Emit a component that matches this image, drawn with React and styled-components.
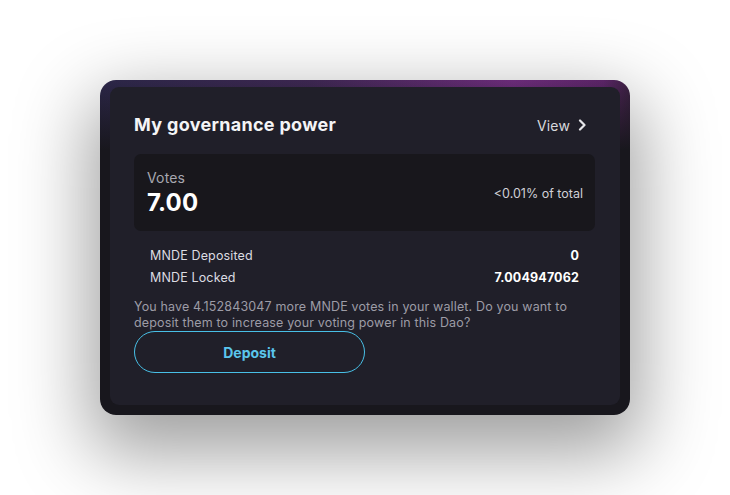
import React from 'react'
import styled, { createGlobalStyle } from 'styled-components'

const Global = createGlobalStyle`
    html, body {
        margin: 0;
        padding: 0;
        background: #ffffff;
    }
    body {
        font-family: Inter, "Noto Sans", sans-serif;
    }
`

const ChevronRight = () => (
    <svg width="10" height="12" viewBox="0 0 10 12" fill="none">
        <path d="M3 1.5 L7.5 6 L3 10.5" stroke="#e6e6ea" strokeWidth="2.2" strokeLinecap="round" strokeLinejoin="round" />
    </svg>
)

export default function App() {
    return (
        <Page>
            <Global />
            <Frame>
                <Card>
                    <Header>
                        <Title>My governance power</Title>
                        <ViewLink>
                            View <ChevronRight />
                        </ViewLink>
                    </Header>

                    <VotesBox>
                        <div>
                            <Label>Votes</Label>
                            <Amount>7.00</Amount>
                        </div>
                        <Share>&lt;0.01% of total</Share>
                    </VotesBox>

                    <Stats>
                        <StatRow>
                            <span>MNDE Deposited</span>
                            <Value>0</Value>
                        </StatRow>
                        <StatRow>
                            <span>MNDE Locked</span>
                            <Value>7.004947062</Value>
                        </StatRow>
                    </Stats>

                    <Note>
                        You have 4.152843047 more MNDE votes in your wallet. Do you want to
                        deposit them to increase your voting power in this Dao?
                    </Note>

                    <DepositButton>Deposit</DepositButton>
                </Card>
            </Frame>
        </Page>
    )
}

const Page = styled.div`
    min-height: 100vh;
    display: flex;
    align-items: center;
    justify-content: center;
`

const Frame = styled.div`
    width: 530px;
    box-sizing: border-box;
    padding: 7px 10px 10px;
    border-radius: 16px;
    background:
        linear-gradient(180deg, rgba(24, 23, 29, 0) 0px, #18171d 70px),
        linear-gradient(90deg, #2b2647 0%, #3c2650 40%, #6a2b78 78%, #5a2466 95%, #3a2040 100%);
    box-shadow: 0 28px 75px 10px rgba(0, 0, 0, 0.38);
`

const Card = styled.div`
    background: #201f29;
    border-radius: 9px;
    padding: 27px 25px 32px 24px;
    color: #ffffff;
    letter-spacing: 0.15px;
`

const Header = styled.div`
    display: flex;
    align-items: center;
    justify-content: space-between;
    margin-bottom: 18px;
`

const Title = styled.h2`
    margin: 0;
    font-size: 18px;
    font-weight: 700;
    line-height: 22px;
    letter-spacing: 0.3px;
    color: #f4f4f6;
`

const ViewLink = styled.a`
    display: flex;
    align-items: center;
    gap: 7px;
    font-size: 14px;
    color: #d8d8de;
    margin-right: 8px;
    cursor: pointer;
`

const VotesBox = styled.div`
    display: flex;
    align-items: center;
    justify-content: space-between;
    background: #18171c;
    border-radius: 7px;
    padding: 15px 12px 13px 13px;
`

const Label = styled.div`
    font-size: 14px;
    line-height: 18px;
    color: #a7a7b0;
`

const Amount = styled.div`
    font-size: 24px;
    font-weight: 700;
    line-height: 31px;
    color: #ffffff;
`

const Share = styled.div`
    font-size: 12.5px;
    color: #d0d0d6;
    letter-spacing: 0;
`

const Stats = styled.div`
    display: flex;
    flex-direction: column;
    gap: 6px;
    padding: 17px 16px 0;
`

const StatRow = styled.div`
    display: flex;
    justify-content: space-between;
    font-size: 12.5px;
    line-height: 16px;
    color: #dcdce2;
`

const Value = styled.span`
    font-weight: 700;
    color: #ffffff;
`

const Note = styled.p`
    margin: 13px 0 0;
    font-size: 12.5px;
    line-height: 16px;
    color: #9d9ca6;
    max-width: 445px;
`

const DepositButton = styled.button`
    display: block;
    width: 231px;
    height: 42px;
    margin-top: 0;
    border: 1px solid #48bfe6;
    border-radius: 21px;
    background: transparent;
    color: #5ac5ec;
    font-family: Inter, "Noto Sans", sans-serif;
    font-size: 14px;
    font-weight: 700;
    cursor: pointer;
`
